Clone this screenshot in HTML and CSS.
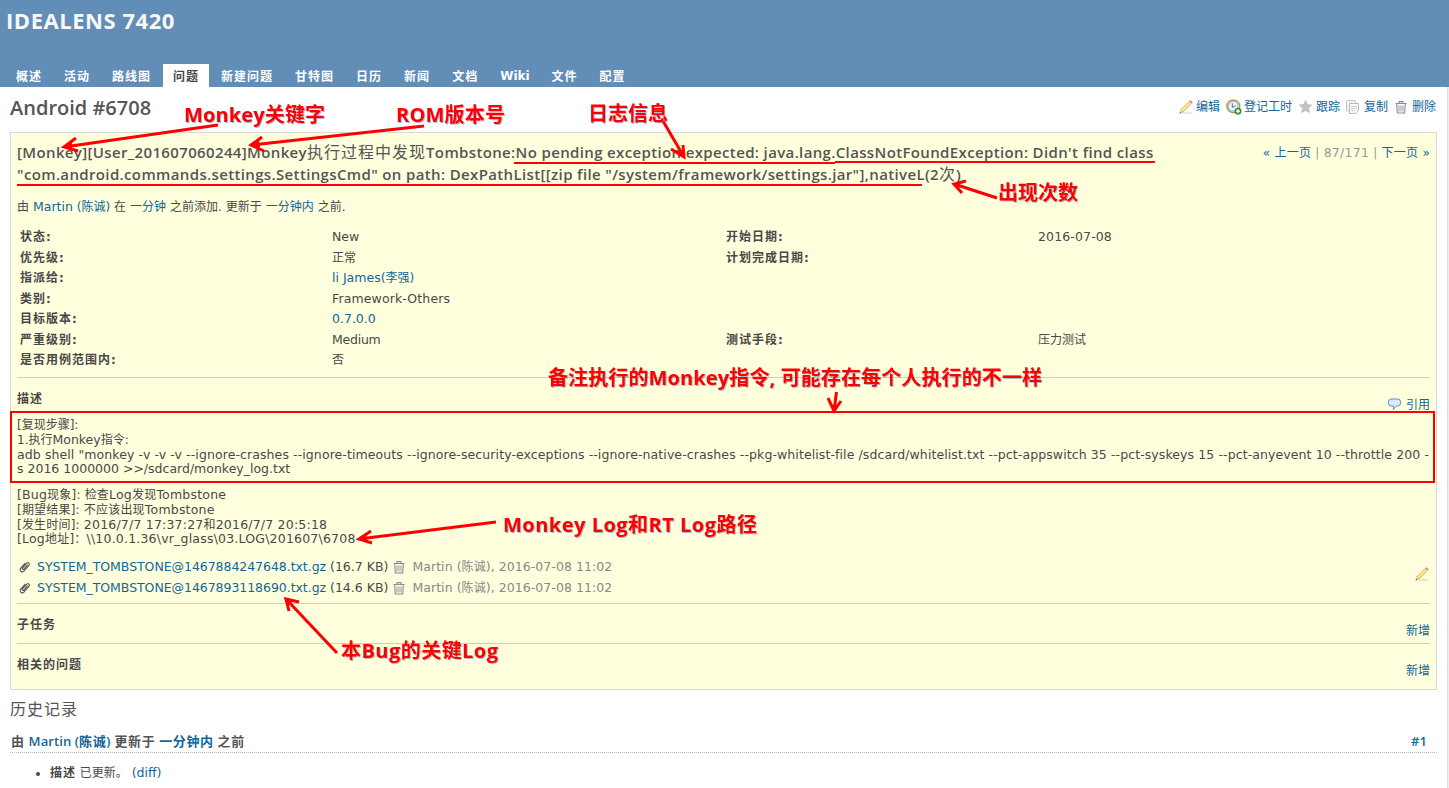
FILE: index.html
```html
<!DOCTYPE html>
<html lang="zh-CN">
<head>
<meta charset="utf-8">
<title>Android #6708 - IDEALENS 7420</title>
<link rel="stylesheet" href="styles.css">
</head>
<body>
<svg class="defs" width="0" height="0">
  <defs>
    <symbol id="pencil" viewBox="0 0 16 16">
      <ellipse cx="9" cy="14" rx="6" ry="1" fill="#000" opacity=".1"/>
      <path d="M1.600 14.400l1-3.400 2.200 2.200z" fill="#e8c898"/><path d="M1.600 14.400l.5-1.700 1.200 1.200z" fill="#444"/>
      <path d="M2.600 11L10.400 3.200 12.600 5.400 4.800 13.200z" fill="#fbe07a" stroke="#d0a540" stroke-width=".7"/>
      <path d="M3.900 11.900L11.400 4.400" stroke="#fff3b8" stroke-width=".8"/>
      <path d="M10.400 3.200l1-1 2.200 2.200-1 1z" fill="#ddd"/>
      <path d="M11.400 2.200c1.300-1.300 3.500.9 2.200 2.200z" fill="#f27878" stroke="#e06060" stroke-width=".5"/>
    </symbol>
    <symbol id="clock" viewBox="0 0 16 16">
      <circle cx="7.300" cy="7.300" r="6.400" fill="#dcecf8" stroke="#b39a6b" stroke-width="1.500"/>
      <circle cx="7.300" cy="7.300" r="4.900" fill="#eef6fc" stroke="#7fa3c4" stroke-width=".8"/>
      <path d="M6.300 4.300v4.200L9.800 6.600" fill="none" stroke="#4b77a6" stroke-width="1"/>
      <circle cx="12" cy="12.200" r="3.200" fill="#4d9a3c" stroke="#2f6e27" stroke-width=".6"/>
      <path d="M12 10.200v4M10 12.200h4" stroke="#fff" stroke-width="1.200"/>
    </symbol>
    <symbol id="star" viewBox="0 0 16 16">
      <path d="M7.500 1.600l1.900 4 4.300.5-3.200 3 .9 4.500-3.900-2.200-3.900 2.200.9-4.500-3.200-3 4.300-.5z" fill="#c4c4c4" stroke="#b4b4b4" stroke-width=".7"/>
    </symbol>
    <symbol id="copy" viewBox="0 0 16 16">
      <rect x=".5" y="1.500" width="9" height="10.500" rx="1" fill="#f4f4f4" stroke="#c2c2c2"/>
      <path d="M3.500 4.500h9v7l-3 3h-6z" fill="#fafafa" stroke="#b8b8b8"/>
      <path d="M5 7.500h6M5 9.500h6M5 11.500h4" stroke="#c8c8c8" stroke-width=".8"/>
    </symbol>
    <symbol id="trash" viewBox="0 0 16 16">
      <path d="M1.500 4.500h11M5 4V2.600h4V4M2.700 5l.6 9h7.400l.6-9" fill="none" stroke="#8b8b99" stroke-width="1.100"/>
      <path d="M5 6.500v6M7 6.500v6M9 6.500v6" stroke="#8b8b99" stroke-width=".9"/>
    </symbol>
    <symbol id="bubble" viewBox="0 0 16 16">
      <path d="M4.200 2h6.600a2.900 2.900 0 0 1 2.700 3v1.200a2.900 2.900 0 0 1-2.900 2.900H9.500L6.200 12.500l.6-3.400H4.200a2.700 2.700 0 0 1-2.700-2.900V4.900a2.900 2.900 0 0 1 2.700-2.900z" fill="#dcebfb" stroke="#5c8fc4"/>
    </symbol>
    <symbol id="clip" viewBox="0 0 16 16">
      <path d="M10.300 6.200L6.900 10.100c-.9 1-2.200-.2-1.300-1.200l4-4.600c1.500-1.600 3.800.4 2.300 2.100l-4.800 5.500c-2.200 2.400-5.400-.5-3.200-2.900L8 4.300" fill="none" stroke="#606060" stroke-width="1.200" stroke-linecap="round"/>
    </symbol>
  </defs>
</svg>

<header class="header">
  <h1>IDEALENS 7420</h1>
  <nav class="tabs">
    <a>概述</a><a>活动</a><a>路线图</a><a class="on">问题</a><a>新建问题</a><a>甘特图</a><a>日历</a><a>新闻</a><a>文档</a><a class="wiki">Wiki</a><a>文件</a><a>配置</a>
  </nav>
</header>

<main class="content">
  <div class="top">
    <h2>Android #6708</h2>
    <div class="actions">
      <a><svg><use href="#pencil"/></svg>编辑</a>
      <a><svg><use href="#clock"/></svg>登记工时</a>
      <a><svg><use href="#star"/></svg>跟踪</a>
      <a><svg><use href="#copy"/></svg>复制</a>
      <a><svg><use href="#trash"/></svg>删除</a>
    </div>
  </div>

  <section class="issue">
    <div class="subject">
      <h3>[Monkey][User_201607060244]Monkey<span class="han">执行过程中发现</span>Tombstone:No pending exception expected: java.lang.ClassNotFoundException: Didn't find class<br>"com.android.commands.settings.SettingsCmd" on path: DexPathList[[zip file "/system/framework/settings.jar"],nativeL(2<span class="han">次</span>)</h3>
      <div class="pager"><a>« 上一页</a> | <span class="v">87/171</span> | <a>下一页 »</a></div>
    </div>
    <p class="author">由 <a><span class="v">Martin</span> (陈诚)</a> 在 <a>一分钟</a> 之前添加. 更新于 <a>一分钟内</a> 之前.</p>

    <div class="attrs">
      <b>状态:</b><span class="v">New</span><b>开始日期:</b><span class="v num">2016-07-08</span>
      <b>优先级:</b><span class="c">正常</span><b>计划完成日期:</b><span></span>
      <b>指派给:</b><a><span class="v">li James(</span>李强)</a><b></b><span></span>
      <b>类别:</b><span class="v num">Framework-Others</span><b></b><span></span>
      <b>目标版本:</b><a class="v">0.7.0.0</a><b></b><span></span>
      <b>严重级别:</b><span class="v med">Medium</span><b>测试手段:</b><span class="c">压力测试</span>
      <b>是否用例范围内:</b><span class="c">否</span><b></b><span></span>
    </div>

    <div class="desc-head"><b>描述</b><a><svg><use href="#bubble"/></svg>引用</a></div>
    <div class="steps">
      <p class="c">[复现步骤]:</p>
      <p>1.执行<span class="v">Monkey</span>指令:</p>
      <p class="v cmd">adb shell "monkey -v -v -v --ignore-crashes --ignore-timeouts --ignore-security-exceptions --ignore-native-crashes --pkg-whitelist-file /sdcard/whitelist.txt --pct-appswitch 35 --pct-syskeys 15 --pct-anyevent 10 --throttle 200 -</p>
      <p class="v">s 2016 1000000 &gt;&gt;/sdcard/monkey_log.txt</p>
    </div>
    <div class="result">
      <p><span class="v">[Bug</span>现象]: 检查<span class="v">Log</span>发现<span class="v">Tombstone</span></p>
      <p>[期望结果]: 不应该出现<span class="v">Tombstone</span></p>
      <p>[发生时间]: <span class="v">2016/7/7 17:37:27</span>和<span class="v">2016/7/7 20:5:18</span></p>
      <p><span class="v">[Log</span>地址]：<span class="v">\\10.0.1.36\vr_glass\03.LOG\201607\6708</span></p>
    </div>

    <div class="files">
      <div class="list">
        <div class="file"><svg><use href="#clip"/></svg><a class="v">SYSTEM_TOMBSTONE@1467884247648.txt.gz</a><span class="v">(16.7 KB)</span><svg><use href="#trash"/></svg><span class="who"><span class="v">Martin (</span>陈诚<span class="v">), 2016-07-08 11:02</span></span></div>
        <div class="file"><svg><use href="#clip"/></svg><a class="v">SYSTEM_TOMBSTONE@1467893118690.txt.gz</a><span class="v">(14.6 KB)</span><svg><use href="#trash"/></svg><span class="who"><span class="v">Martin (</span>陈诚<span class="v">), 2016-07-08 11:02</span></span></div>
      </div>
      <svg class="pen"><use href="#pencil"/></svg>
    </div>

    <div class="sub"><b>子任务</b><a>新增</a></div>
    <div class="sub"><b>相关的问题</b><a>新增</a></div>
  </section>

  <h3 class="history">历史记录</h3>
  <div class="entry"><span>由 <a><span class="m">Martin (</span>陈诚<span class="m">)</span></a> 更新于 <a>一分钟内</a> 之前</span><a class="m">#1</a></div>
  <ul class="details"><li><b>描述</b> 已更新。 <a class="v">(diff)</a></li></ul>
</main>

<svg class="notes" viewBox="0 0 1449 788">
  <g class="lines">
    <path d="M514 163H835M835 162H1155M17 185H922"/>
    <rect x="11" y="412" width="1423" height="70"/>
  </g>
  <g class="arrows">
    <path d="M218 125L64 147M76 138L64 147L78 151"/>
    <path d="M424 126L251 145M262 137L251 145L264 151"/>
    <path d="M663 121L684 157M671 149L684 157L683 145"/>
    <path d="M997 198L954 184M966 181L954 184L962 193"/>
    <path d="M836.500 392L834 411M828 398L834 411L841 401"/>
    <path d="M496 522L359 539M371 531L359 539L372 543"/>
    <path d="M337 653L286 599M299 602L286 599L289 611"/>
  </g>
  <g class="heads">
    <path d="M62 147l10-5v8zM249 145l10-5 1 8zM685 159l-8-6 6-3zM952 184l9-2-3 7zM834 412l-3-7h6zM357 539l9-5 1 8zM284 598l9 3-5 5z"/>
  </g>
  <g class="words">
    <text x="184" y="122" textLength="141">Monkey关键字</text>
    <text x="396" y="122" textLength="109">ROM版本号</text>
    <text x="588" y="121" textLength="80">日志信息</text>
    <text x="998" y="200" textLength="80">出现次数</text>
    <text x="548" y="384.500" textLength="494">备注执行的Monkey指令, 可能存在每个人执行的不一样</text>
    <text x="503" y="532" textLength="254">Monkey Log和RT Log路径</text>
    <text x="341" y="657.500" textLength="157">本Bug的关键Log</text>
  </g>
</svg>
</body>
</html>
```
FILE: styles.css
```css
* { box-sizing: border-box; }
body {
  margin: 0;
  height: 788px;
  overflow: hidden;
  position: relative;
  background: #eee;
  color: #484848;
  font: 12px/15px "DejaVu Sans", "Noto Sans CJK SC", sans-serif;
  white-space: nowrap;
}
a { color: #169; text-decoration: none; }
p, h1, h2, h3, ul { margin: 0; padding: 0; }
b { letter-spacing: 1px; }
.defs { position: absolute; }
.v { font-size: 12.5px; }
.num { letter-spacing: .13px; }
svg { width: 16px; height: 16px; flex: none; }

.header {
  height: 87px;
  background: #628db6;
  padding: 7px 6px 0;
  display: flex;
  flex-direction: column;
  justify-content: space-between;
}
.header h1 { font: bold 22px/26px "Open Sans", sans-serif; letter-spacing: .55px; color: #f8f8f8; }
.tabs { display: flex; gap: 2px; }
.tabs a {
  height: 23px;
  padding: 0 10px;
  color: #fff;
  font-weight: bold;
  line-height: 26px;
  letter-spacing: 1px;
}
.tabs .on { background: #fff; color: #484848; }
.tabs .wiki { letter-spacing: 0; line-height: 24px; }

.content {
  width: 1448px;
  height: 701px;
  padding: 0 10px;
  background: #fff;
  border-right: 1px solid #ddd;
}
.top { display: flex; justify-content: space-between; height: 45px; padding-top: 9px; }
h2 { font: 600 20px/24px "Open Sans", sans-serif; color: #555; }
.actions { display: flex; gap: 6px; height: 22px; line-height: 24px; padding-right: 1px; }
.actions a { display: flex; align-items: center; gap: 2px; }

.issue {
  width: 1427px;
  height: 558px;
  padding: 9px 6px 0;
  background: #ffffdd;
  border: 1px solid #d7d7d7;
}
.subject { display: flex; justify-content: space-between; height: 54px; }
.subject h3 {
  font: 600 15px/22px "Open Sans", "Noto Sans CJK SC", sans-serif;
  letter-spacing: .36px;
  margin-top: -1px;
  color: #555;
}
.subject .han { font-size: 16px; letter-spacing: 1px; font-weight: 400; }
.pager { color: #999; line-height: 22px; letter-spacing: .25px; }
.author { height: 20px; line-height: 21px; letter-spacing: .03px; }
.attrs {
  display: grid;
  grid-template-columns: 312px 394px 312px 1fr;
  grid-auto-rows: 20.5px;
  line-height: 21px;
  height: 161px;
  padding: 10px 0 0 3px;
}
.attrs b, .attrs .c { line-height: 22.5px; }
.attrs .med { letter-spacing: -.25px; }
.desc-head {
  display: flex;
  justify-content: space-between;
  height: 36px;
  border-top: 1px solid #ccc;
  line-height: 43px;
}
.desc-head a { display: flex; align-items: center; gap: 3px; padding-top: 18px; line-height: 16px; }
.steps { padding-top: 4px; height: 74px; }
.steps p, .result p { height: 14.8px; line-height: 15px; }
.steps p.c { line-height: 17px; }
.cmd { letter-spacing: .095px; }
.result { height: 59px; letter-spacing: .2px; }
.files { display: flex; justify-content: space-between; align-items: center; height: 57px; padding-top: 6px; }
.file { display: flex; align-items: center; gap: 4px; height: 21px; line-height: 14px; }
.file > a { letter-spacing: -.05px; }
.who { color: #888; letter-spacing: .06px; }
.pen { margin-bottom: 7px; }
.sub { display: flex; justify-content: space-between; height: 40px; border-top: 1px solid #ccc; line-height: 43px; }
.sub a { padding-top: 6px; }

.history { font: 400 16px/22px "Noto Sans CJK SC", sans-serif; letter-spacing: 1px; color: #555; margin-top: 7px; }
.entry {
  display: flex;
  justify-content: space-between;
  height: 34px;
  padding: 0 10px 0 1px;
  border-bottom: 1px dotted #bbb;
  font: bold 13px/45px "Open Sans", "Noto Sans CJK SC", sans-serif;
  letter-spacing: .6px;
  color: #555;
}
.entry .m { font-weight: 600; letter-spacing: .1px; }
.details { padding-left: 40px; line-height: 40px; }

.notes { position: absolute; left: 0; top: 0; width: 1449px; height: 788px; }
.lines { fill: none; stroke: #f00; stroke-width: 2; }
.arrows { fill: none; stroke: #f00; stroke-width: 3; }
.heads { fill: #f00; }
.words { fill: #f00; font: bold 20px "Open Sans", "Noto Sans CJK SC", sans-serif; filter: drop-shadow(1px 1px 0 rgba(110, 110, 170, .5)); }
```
